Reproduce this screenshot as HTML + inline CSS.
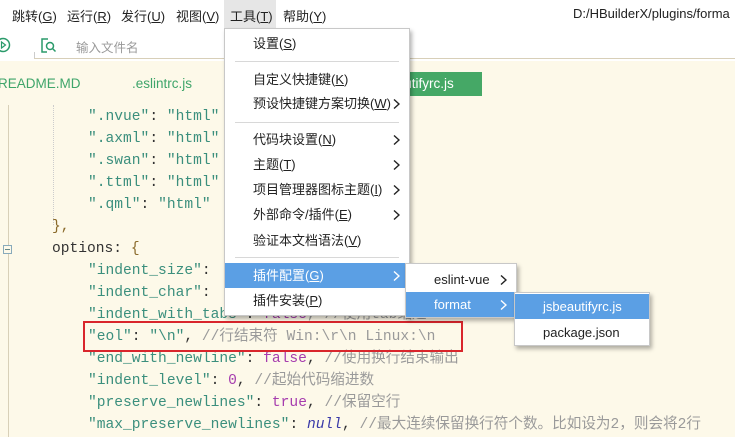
<!DOCTYPE html>
<html><head><meta charset="utf-8"><style>
*{margin:0;padding:0;box-sizing:border-box}
body{width:735px;height:437px;overflow:hidden;position:relative;background:#fff;font-family:"Liberation Sans","Noto Sans CJK SC",sans-serif;font-size:13px;color:#222}
.a{position:absolute;white-space:nowrap}
.code{font-family:"Liberation Mono","Noto Sans CJK SC",monospace;font-size:14.6px;line-height:22px}
.s{color:#3b8f7d}.p{color:#8a6a2a}.k{color:#333}.f{color:#a63cae}.c{color:#9a9a9a}.n{color:#3a3aa8;font-style:italic}
.menu{position:absolute;background:#fff;border:1px solid #c8c8c8;box-shadow:2px 3px 4px rgba(0,0,0,.3)}
.it{position:absolute;left:0;right:0;height:25px;line-height:25px;white-space:nowrap}
.hl{background:#5b9fe4;color:#fff}
.sep{position:absolute;left:10px;right:10px;height:1px;background:#d8d8d8}
.ar{position:absolute;right:9px;top:8px;width:7px;height:10px}
</style></head><body>
<svg width="0" height="0" style="position:absolute"><defs><symbol id="chev" viewBox="0 0 7 10"><path d="M1 0.5L6 5L1 9.5" fill="none" stroke="currentColor" stroke-width="1.4"/></symbol></defs></svg>
<!-- menubar -->
<div class="a" style="left:224px;top:0;width:52px;height:28px;background:#e6e6e6"></div>
<div class="a" style="left:12px;top:6px">跳转(<u>G</u>)</div>
<div class="a" style="left:67px;top:6px">运行(<u>R</u>)</div>
<div class="a" style="left:121px;top:6px">发行(<u>U</u>)</div>
<div class="a" style="left:176px;top:6px">视图(<u>V</u>)</div>
<div class="a" style="left:230px;top:6px">工具(<u>T</u>)</div>
<div class="a" style="left:283px;top:6px">帮助(<u>Y</u>)</div>
<div class="a" style="left:573px;top:6px">D:/HBuilderX/plugins/forma</div>
<!-- toolbar -->
<svg class="a" style="left:-6px;top:36px" width="18" height="18"><circle cx="9" cy="9" r="6.5" fill="none" stroke="#2a9a6a" stroke-width="1.5"/><path d="M7.5 6v6l4-3z" fill="none" stroke="#2a9a6a" stroke-width="1.2"/></svg>
<svg class="a" style="left:40px;top:37px" width="18" height="18"><path d="M8 2H2v13h5" fill="none" stroke="#2a9a6a" stroke-width="1.5"/><circle cx="10" cy="9" r="3.5" fill="none" stroke="#2a9a6a" stroke-width="1.5"/><path d="M12.5 11.5l3 3" stroke="#2a9a6a" stroke-width="1.5"/></svg>
<div class="a" style="left:76px;top:37px;color:#999;font-size:12.5px">输入文件名</div>
<div class="a" style="left:34px;top:52px;width:1px;height:7px;background:#ccc"></div>
<div class="a" style="left:34px;top:58px;width:701px;height:1px;background:#d8cfb8"></div>
<!-- editor -->
<div class="a" style="left:0;top:61px;width:735px;height:376px;background:#fdf9e9"></div>
<div class="a" style="left:400px;top:72px;width:82px;height:24px;background:#45a866"></div>
<div class="a" style="left:-2px;top:76px;color:#3fa56a;font-size:13.5px">README.MD</div>
<div class="a" style="left:132px;top:76px;color:#3fa56a;font-size:13.5px">.eslintrc.js</div>
<div class="a" style="left:372px;top:76px;color:#fff;font-size:13.5px">jsbeautifyrc.js</div>
<div class="a" style="left:8px;top:105px;width:1px;height:332px;background:#d8d0b8"></div>
<div class="a" style="left:53px;top:105px;width:1px;height:120px;border-left:1px dotted #ccc"></div>
<div class="a" style="left:3px;top:245px;width:9px;height:9px;border:1px solid #8ab;background:#fdf9e9"></div>
<div class="a" style="left:5px;top:249px;width:5px;height:1px;background:#688"></div>
<div class="a code" style="left:0;top:106px">
<div style="padding-left:88px"><span class="s">".nvue"</span><span class="k">: </span><span class="s">"html"</span></div>
<div style="padding-left:88px"><span class="s">".axml"</span><span class="k">: </span><span class="s">"html"</span></div>
<div style="padding-left:88px"><span class="s">".swan"</span><span class="k">: </span><span class="s">"html"</span></div>
<div style="padding-left:88px"><span class="s">".ttml"</span><span class="k">: </span><span class="s">"html"</span></div>
<div style="padding-left:88px"><span class="s">".qml"</span><span class="k">: </span><span class="s">"html"</span></div>
<div style="padding-left:52px"><span class="p">},</span></div>
<div style="padding-left:52px"><span class="k">options: </span><span class="p">{</span></div>
<div style="padding-left:88px"><span class="s">"indent_size"</span><span class="k">: </span></div>
<div style="padding-left:88px"><span class="s">"indent_char"</span><span class="k">: </span></div>
<div style="padding-left:88px"><span class="s">"indent_with_tabs"</span><span class="k">: </span><span class="f">false</span><span class="c">, //使用tab缩进</span></div>
<div style="padding-left:88px"><span class="s">"eol"</span><span class="k">: </span><span class="s">"\n"</span><span class="k">, </span><span class="c">//行结束符 Win:\r\n Linux:\n</span></div>
<div style="padding-left:88px"><span class="s">"end_with_newline"</span><span class="k">: </span><span class="f">false</span><span class="k">, </span><span class="c">//使用换行结束输出</span></div>
<div style="padding-left:88px"><span class="s">"indent_level"</span><span class="k">: </span><span class="f">0</span><span class="k">, </span><span class="c">//起始代码缩进数</span></div>
<div style="padding-left:88px"><span class="s">"preserve_newlines"</span><span class="k">: </span><span class="f">true</span><span class="k">, </span><span class="c">//保留空行</span></div>
<div style="padding-left:88px"><span class="s">"max_preserve_newlines"</span><span class="k">: </span><span class="n">null</span><span class="k">, </span><span class="c">//最大连续保留换行符个数。比如设为2，则会将2行</span></div>
</div>
<div class="a" style="left:83px;top:321px;width:380px;height:31px;border:2.5px solid #d9262c"></div>
<!-- main menu -->
<div class="menu" style="left:224px;top:28px;width:186px;height:288px">
<div class="it" style="top:2px;padding-left:28px">设置(<u>S</u>)</div>
<div class="sep" style="top:32px"></div>
<div class="it" style="top:38px;padding-left:28px">自定义快捷键(<u>K</u>)</div>
<div class="it" style="top:62px;padding-left:28px">预设快捷键方案切换(<u>W</u>)<svg class="ar"><use href="#chev"/></svg></div>
<div class="sep" style="top:93px"></div>
<div class="it" style="top:98px;padding-left:28px">代码块设置(<u>N</u>)<svg class="ar"><use href="#chev"/></svg></div>
<div class="it" style="top:123px;padding-left:28px">主题(<u>T</u>)<svg class="ar"><use href="#chev"/></svg></div>
<div class="it" style="top:148px;padding-left:28px">项目管理器图标主题(<u>I</u>)<svg class="ar"><use href="#chev"/></svg></div>
<div class="it" style="top:173px;padding-left:28px">外部命令/插件(<u>E</u>)<svg class="ar"><use href="#chev"/></svg></div>
<div class="it" style="top:199px;padding-left:28px">验证本文档语法(<u>V</u>)</div>
<div class="sep" style="top:228px"></div>
<div class="it hl" style="top:234px;padding-left:28px">插件配置(<u>G</u>)<svg class="ar"><use href="#chev"/></svg></div>
<div class="it" style="top:259px;padding-left:28px">插件安装(<u>P</u>)</div>
</div>
<div class="menu" style="left:405px;top:263px;width:112px;height:55px">
<div class="it" style="top:3px;padding-left:28px">eslint-vue<svg class="ar"><use href="#chev"/></svg></div>
<div class="it hl" style="top:28px;padding-left:28px">format<svg class="ar"><use href="#chev"/></svg></div>
</div>
<div class="menu" style="left:514px;top:292px;width:136px;height:54px">
<div class="it hl" style="top:1px;padding-left:28px">jsbeautifyrc.js</div>
<div class="it" style="top:27px;padding-left:28px">package.json</div>
</div>
</body></html>
